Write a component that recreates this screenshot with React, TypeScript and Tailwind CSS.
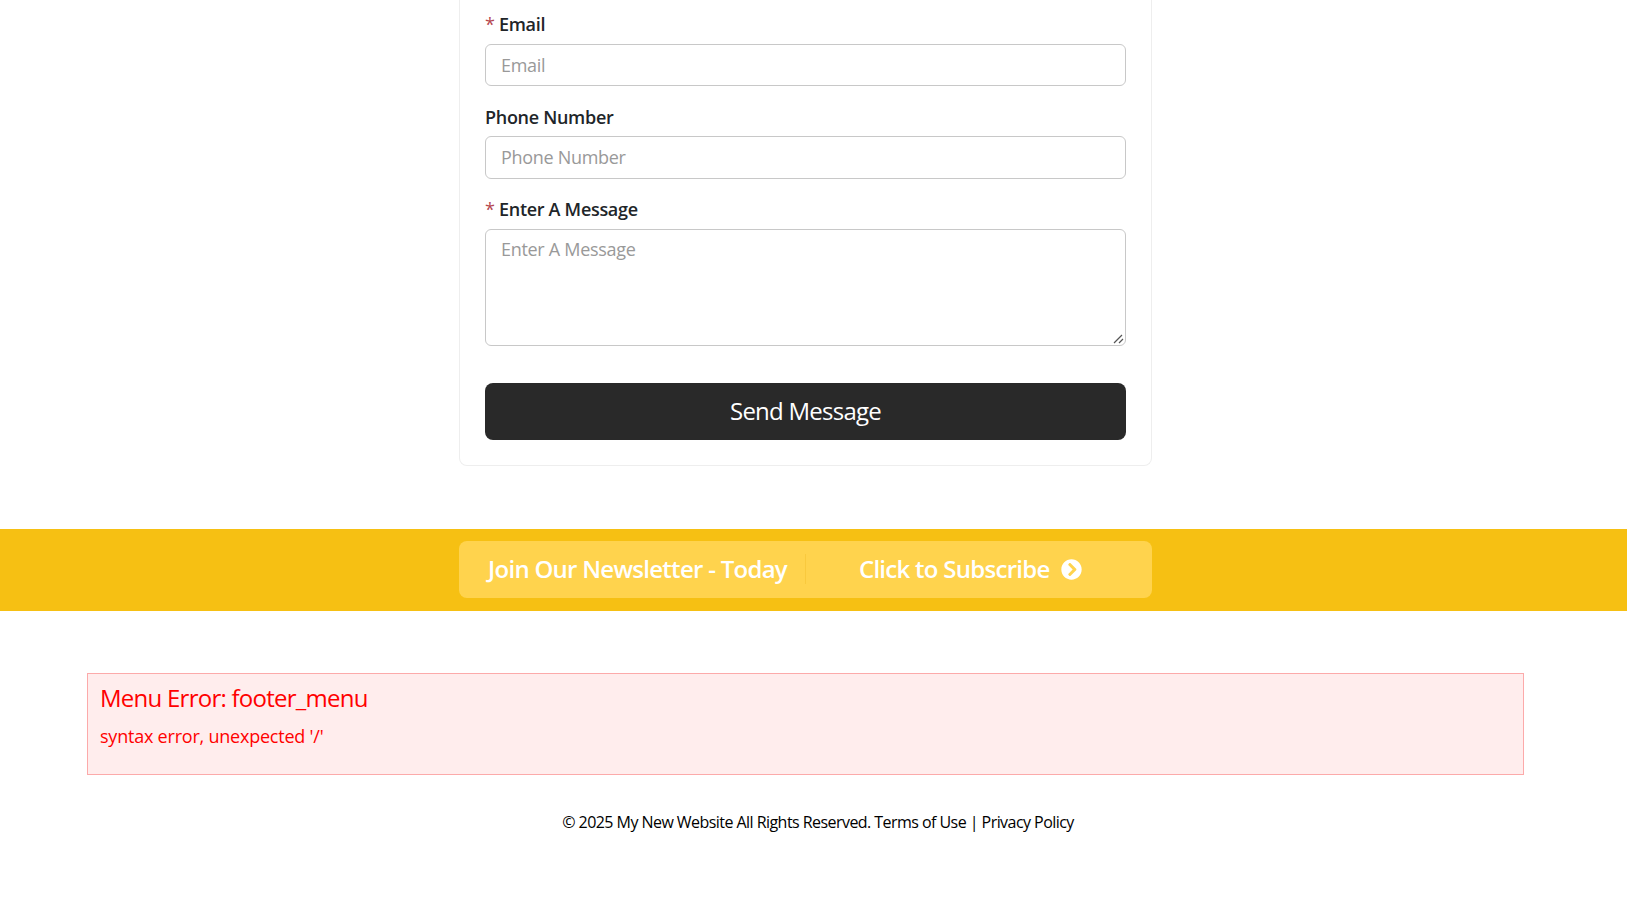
import React from "react";

export default function App() {
  return (
    <div className="bg-white h-[902px] overflow-hidden font-['Open_Sans',sans-serif] text-[#212529]">
      <div className="pr-[16px]">
        <div className="w-[693px] mx-auto border border-t-0 border-[#eeeeee] rounded-b-lg px-[25px] pb-[25px] pt-[12px]">
          <label className="block text-[18px] leading-[24px] font-semibold mb-[8px] tracking-[-0.3px]"><span className="text-[#b5474f] font-normal">* </span>Email</label>
          <input placeholder="Email" className="block w-full h-[42px] border border-[#c8c8c8] rounded-[6px] px-[15px] text-[18px] tracking-[-0.3px] placeholder:text-[#999999] mb-[19px]" />
          <label className="block text-[18px] leading-[24px] font-semibold mb-[7px] tracking-[-0.3px]">Phone Number</label>
          <input placeholder="Phone Number" className="block w-full h-[43px] border border-[#c8c8c8] rounded-[6px] px-[15px] pb-[2px] text-[18px] tracking-[-0.3px] placeholder:text-[#999999] mb-[18px]" />
          <label className="block text-[18px] leading-[24px] font-semibold mb-[8px] tracking-[-0.3px]"><span className="text-[#b5474f] font-normal">* </span>Enter A Message</label>
          <div className="relative mb-[37px]">
            <textarea placeholder="Enter A Message" className="block w-full h-[117px] border border-[#c8c8c8] rounded-[6px] px-[15px] pt-[6px] text-[18px] tracking-[-0.3px] placeholder:text-[#999999] resize-none" />
            <svg className="absolute right-[1px] bottom-[1px]" width="12" height="12" viewBox="0 0 12 12" fill="none" stroke="#555555" strokeWidth="1.2"><path d="M1 10 L9 2 M6 10 L10 6" /></svg>
          </div>
          <button className="block w-full h-[57px] pb-[2px] bg-[#292929] text-white rounded-lg text-[24px] tracking-[-0.75px]">Send Message</button>
        </div>
      </div>
      <div className="mt-[63px] h-[82px] pr-[16px] pb-[2px] bg-[#f6c013] flex items-center justify-center">
        <div className="w-[693px] h-[57px] bg-[#ffd34d] rounded-lg flex items-center text-white text-[24px] font-semibold tracking-[-0.72px]">
          <span className="w-1/2 pl-[29px] border-r border-[#f9c93d] leading-[30px] whitespace-nowrap">Join Our Newsletter - Today</span>
          <span className="flex-1 flex items-center justify-center gap-[11px] whitespace-nowrap pr-[17px]">Click to Subscribe
            <svg width="21" height="21" viewBox="0 0 512 512" fill="currentColor"><path d="M256 8c137 0 248 111 248 248S393 504 256 504 8 393 8 256 119 8 256 8zm113.9 231L234.4 103.5c-9.4-9.4-24.6-9.4-33.9 0l-17 17c-9.4 9.4-9.4 24.6 0 33.9L285.1 256 183.5 357.6c-9.4 9.4-9.4 24.6 0 33.9l17 17c9.4 9.4 24.6 9.4 33.9 0L369.9 273c9.4-9.4 9.4-24.6 0-34z"/></svg>
          </span>
        </div>
      </div>
      <div className="pr-[16px]">
        <div className="mx-[87px] mt-[62px] h-[102px] bg-[#ffeded] border border-[#fcaaaa] px-3 text-[#ff0000]">
          <div className="text-[24px] leading-[32px] mt-[8px] tracking-[-0.75px]">Menu Error: footer_menu</div>
          <div className="text-[18px] leading-[24px] mt-[10px] tracking-[-0.22px]">syntax error, unexpected '/'</div>
        </div>
        <div className="pl-[25px] text-center text-[16px] text-black leading-[24px] mt-[35px] tracking-[-0.55px]">© 2025 My New Website All Rights Reserved. Terms of Use | Privacy Policy</div>
      </div>
    </div>
  );
}
